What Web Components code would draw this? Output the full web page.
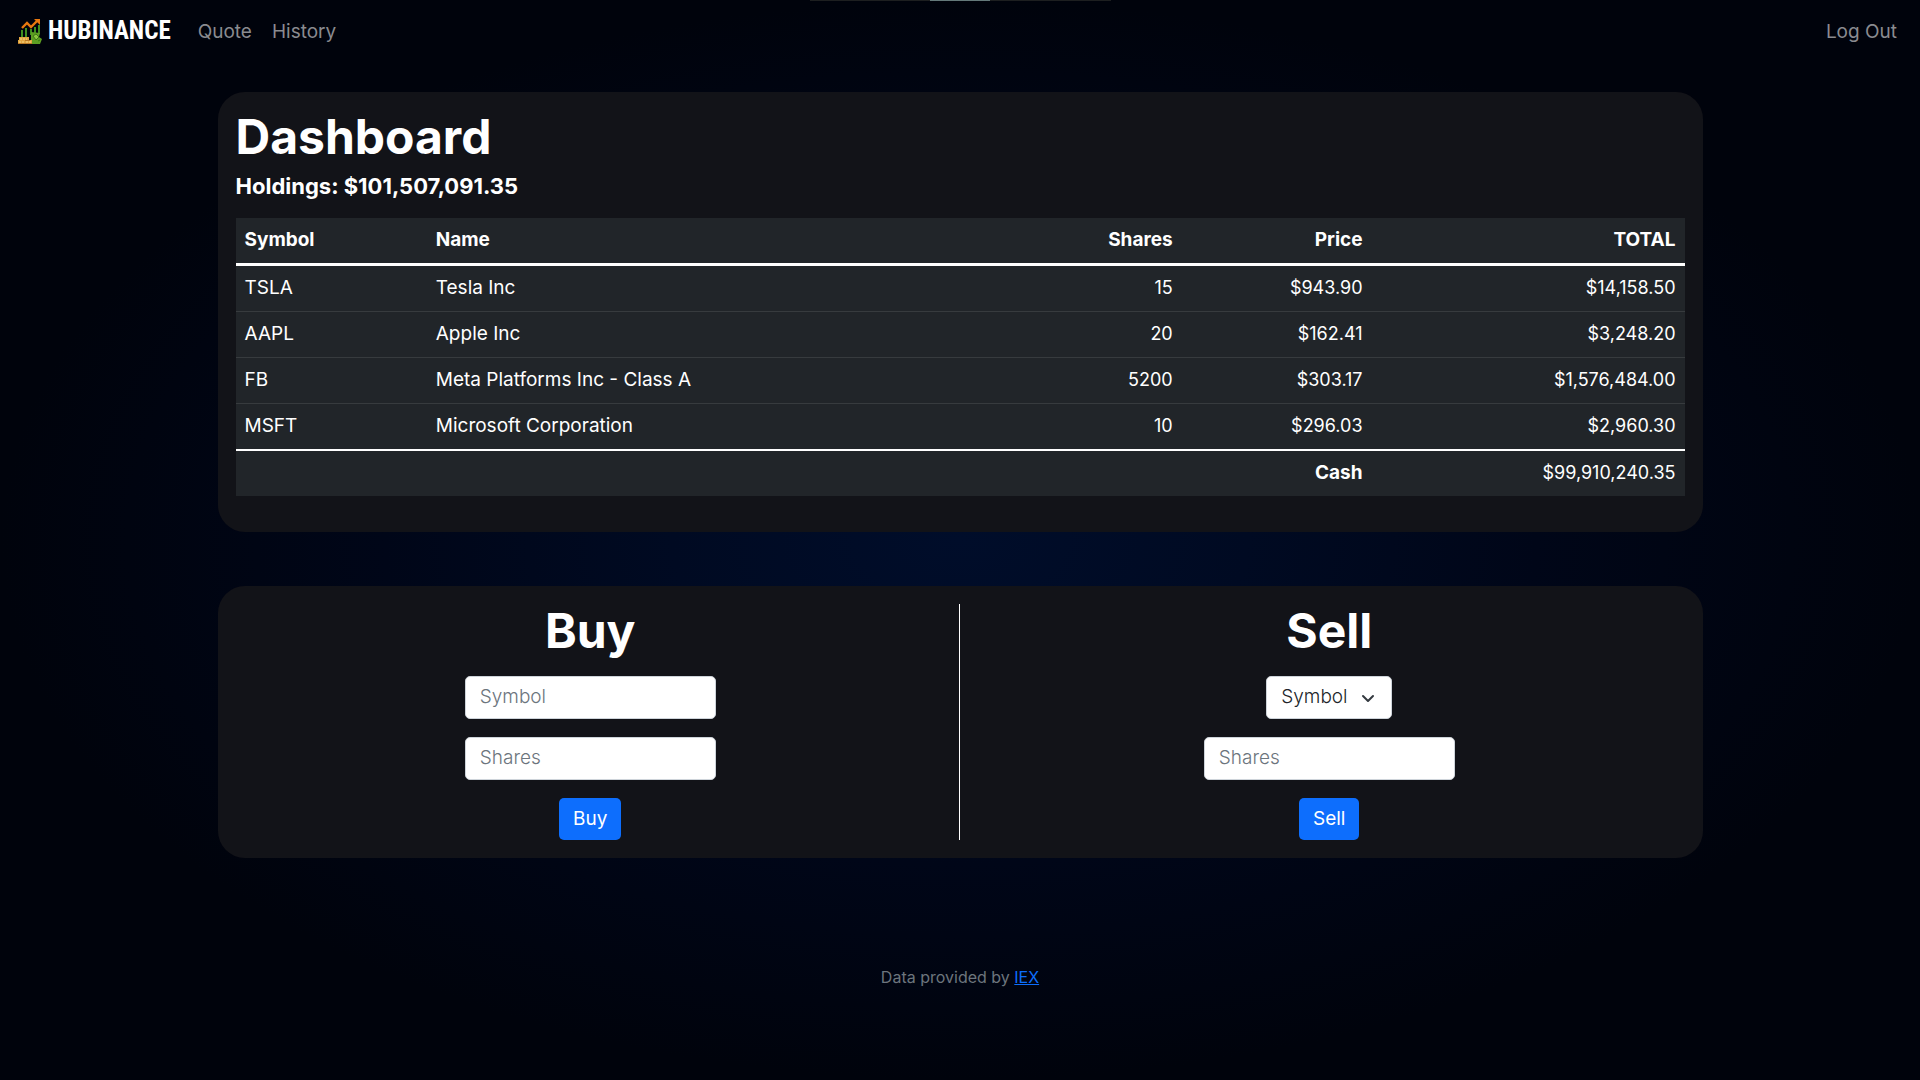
<!DOCTYPE html>
<html lang="en">
<head>
<meta charset="utf-8">
<meta name="viewport" content="width=device-width, initial-scale=1">
<title>Hubinance: Dashboard</title>
<style>
  html { min-height: 100%; background: #00030c; }
  body {
    margin: 0;
    min-height: 100vh;
    background: radial-gradient(ellipse closest-side, #000d2a 0%, #000a22 30%, #000618 60%, #00030c 100%);
    color: #fff;
    font: 400 18px/27px Inter, "Open Sans", sans-serif;
  }
</style>
</head>
<body>
<hb-app></hb-app>

<script>
class HbElement extends HTMLElement {
  constructor() {
    super();
    const t = document.createElement('template');
    t.innerHTML = '<style>*{box-sizing:border-box}' + this.constructor.css + '</style>' + this.html();
    this.attachShadow({ mode: 'open' }).append(t.content.cloneNode(true));
  }
  html() { return '<slot></slot>'; }
}

class HbLogo extends HbElement {
  static css = `
    :host { display: flex; align-items: center; gap: 6px; }
    svg { width: 24px; height: 26px; }
    span { font: 700 25px/34px "Roboto Condensed", Roboto, sans-serif; color: #fff; }
  `;
  html() {
    return `
      <svg viewBox="0 0 24 26" aria-hidden="true">
        <g fill="#3f8f1f">
          <rect x="3" y="12" width="2" height="8"/><rect x="7" y="10" width="2" height="9"/>
          <rect x="12" y="11" width="2" height="6"/><rect x="16" y="9" width="2" height="7"/>
          <rect x="20" y="7" width="2" height="9"/>
        </g>
        <path d="M4 10 9 5l4 4 6-6" fill="none" stroke="#e8780f" stroke-width="2.4"/>
        <path d="M16 1h6v6z" fill="#e8780f"/>
        <path d="M13 14l9 1-1 4 3 2-2 5h-9z" fill="#5d9e22"/>
        <path d="M15 18l3-2 3 3-3 3zM20 23l2-1" fill="#8cc63f" stroke="#2d6a12" stroke-width=".8"/>
        <path d="M1 19h10v3h3v4H0v-4h1z" fill="#e2a640"/>
        <path d="M2 21h7M1 24h6M8 24h5" stroke="#f7d78a" stroke-width="1" stroke-dasharray="2 1"/>
        <path d="M0 25.500h14M7 22.500h5" stroke="#a8641c" stroke-width=".7"/>
      </svg>
      <span>HUBINANCE</span>`;
  }
}

class HbNavbar extends HbElement {
  static css = `
    :host { display: block; }
    nav { display: flex; align-items: center; min-height: 62px; padding: 0 23px 0 18px; }
    .brand { text-decoration: none; margin-right: 27px; }
    .links { display: flex; flex: 1; gap: 20px; font-size: 19px; }
    .links a { color: #8a8b90; text-decoration: none; }
    .end { margin-left: auto; }
  `;
  html() {
    return `
      <nav>
        <a class="brand" href="#"><hb-logo></hb-logo></a>
        <div class="links">
          <a href="#quote">Quote</a><a href="#history">History</a>
          <a class="end" href="#logout">Log Out</a>
        </div>
      </nav>`;
  }
}

class HbCard extends HbElement {
  static css = `
    :host { display: block; background: #121318; border-radius: 27px; padding: 18px; }
    :host([split]) { display: grid; grid-template-columns: 1fr 1fr; padding: 18px 4px; }
  `;
}

const HOLDINGS = [
  ['TSLA', 'Tesla Inc', '15', '$943.90', '$14,158.50'],
  ['AAPL', 'Apple Inc', '20', '$162.41', '$3,248.20'],
  ['FB', 'Meta Platforms Inc - Class A', '5200', '$303.17', '$1,576,484.00'],
  ['MSFT', 'Microsoft Corporation', '10', '$296.03', '$2,960.30'],
];

class HbHoldings extends HbElement {
  static css = `
    :host { display: block; padding-bottom: 18px; }
    h1 { margin: 0 0 9px; font-size: 48px; line-height: 54px; font-weight: 700; }
    h2 { margin: 0 0 18px; font-size: 22px; line-height: 27px; font-weight: 700; }
    table { width: 100%; border-collapse: separate; border-spacing: 0; table-layout: fixed; background: #212529; }
    th, td { padding: 8px 9px 10px; text-align: left; font-size: 19px; }
    th { font-weight: 700; }
    thead th { border-bottom: 3px solid #fff; }
    tbody td { border-bottom: 1px solid #373b3e; }
    tbody tr:last-child td { border-bottom: 2px solid #fff; }
    .num { text-align: right; }
    td.num { font-size: 18px; }
    .symbol { width: 13.2%; }
    .shares { width: 18%; }
    .price { width: 13.1%; }
    .total { width: 21.6%; }
  `;
  html() {
    const rows = HOLDINGS.map(([symbol, name, ...nums]) =>
      `<tr><td>${symbol}</td><td>${name}</td>${nums.map(n => `<td class="num">${n}</td>`).join('')}</tr>`).join('');
    return `
      <h1>Dashboard</h1>
      <h2>Holdings: $101,507,091.35</h2>
      <table>
        <colgroup><col class="symbol"><col><col class="shares"><col class="price"><col class="total"></colgroup>
        <thead><tr><th>Symbol</th><th>Name</th><th class="num">Shares</th><th class="num">Price</th><th class="num">TOTAL</th></tr></thead>
        <tbody>${rows}</tbody>
        <tfoot><tr><th class="num" colspan="4">Cash</th><td class="num">$99,910,240.35</td></tr></tfoot>
      </table>`;
  }
}

const FORM_CSS = `
  :host { display: block; }
  form { display: flex; flex-direction: column; align-items: center; gap: 18px; }
  h1 { margin: 0; font-size: 48px; line-height: 54px; font-weight: 700; }
  input, select {
    height: 43px; padding: 0 14px 2px; border: 1px solid #ced4da; border-radius: 5px;
    background: #fff; color: #212529; font: inherit; font-size: 19px; font-weight: 300;
  }
  input { width: 251px; }
  input::placeholder { color: #6c757d; opacity: 1; }
  button {
    height: 42px; padding: 0 14px 2px; border: 0; border-radius: 5px;
    background: #0d6efd; color: #fff; font: inherit; font-size: 19px;
  }
`;

class HbBuyForm extends HbElement {
  static css = FORM_CSS + ':host { border-right: 1px solid #fff; }';
  html() {
    return `
      <form>
        <h1>Buy</h1>
        <input name="symbol" placeholder="Symbol" aria-label="Symbol">
        <input name="shares" placeholder="Shares" aria-label="Shares">
        <button type="button">Buy</button>
      </form>`;
  }
}

class HbSellForm extends HbElement {
  static css = FORM_CSS + `
    .pick { display: grid; align-items: center; }
    .pick > * { grid-area: 1 / 1; }
    select { appearance: none; width: 126px; }
    svg { justify-self: end; width: 16px; height: 16px; margin-right: 16px; pointer-events: none; }
  `;
  html() {
    return `
      <form>
        <h1>Sell</h1>
        <div class="pick">
          <select name="symbol" aria-label="Symbol"><option>Symbol</option></select>
          <svg viewBox="0 0 16 16" aria-hidden="true"><path d="M3 6l5 5 5-5" fill="none" stroke="#343a40" stroke-width="2" stroke-linecap="round" stroke-linejoin="round"/></svg>
        </div>
        <input name="shares" placeholder="Shares" aria-label="Shares">
        <button type="button">Sell</button>
      </form>`;
  }
}

class HbFooter extends HbElement {
  static css = `
    :host { display: block; text-align: center; font-size: 16px; line-height: 24px; color: #6c757d; }
    a { color: #0d6efd; }
  `;
  html() { return `Data provided by <a href="#iex">IEX</a>`; }
}

class HbProgress extends HbElement {
  static css = `
    :host { position: absolute; top: 0; left: 0; right: 0; display: flex; justify-content: center; height: 1px; }
    div { display: flex; justify-content: center; width: 301px; height: 1px; background: #1d1f20; }
    i { width: 60px; background: #64797a; }
  `;
  html() { return '<div><i></i></div>'; }
}

class HbApp extends HbElement {
  static css = `
    :host { display: block; }
    main { display: flex; flex-direction: column; gap: 54px; max-width: 1485px; margin: 30px auto 107px; }
  `;
  html() {
    return `
      <hb-progress></hb-progress>
      <hb-navbar></hb-navbar>
      <main>
        <hb-card><hb-holdings></hb-holdings></hb-card>
        <hb-card split><hb-buy-form></hb-buy-form><hb-sell-form></hb-sell-form></hb-card>
      </main>
      <hb-footer></hb-footer>`;
  }
}

customElements.define('hb-logo', HbLogo);
customElements.define('hb-navbar', HbNavbar);
customElements.define('hb-card', HbCard);
customElements.define('hb-holdings', HbHoldings);
customElements.define('hb-buy-form', HbBuyForm);
customElements.define('hb-sell-form', HbSellForm);
customElements.define('hb-footer', HbFooter);
customElements.define('hb-progress', HbProgress);
customElements.define('hb-app', HbApp);
</script>
</body>
</html>
